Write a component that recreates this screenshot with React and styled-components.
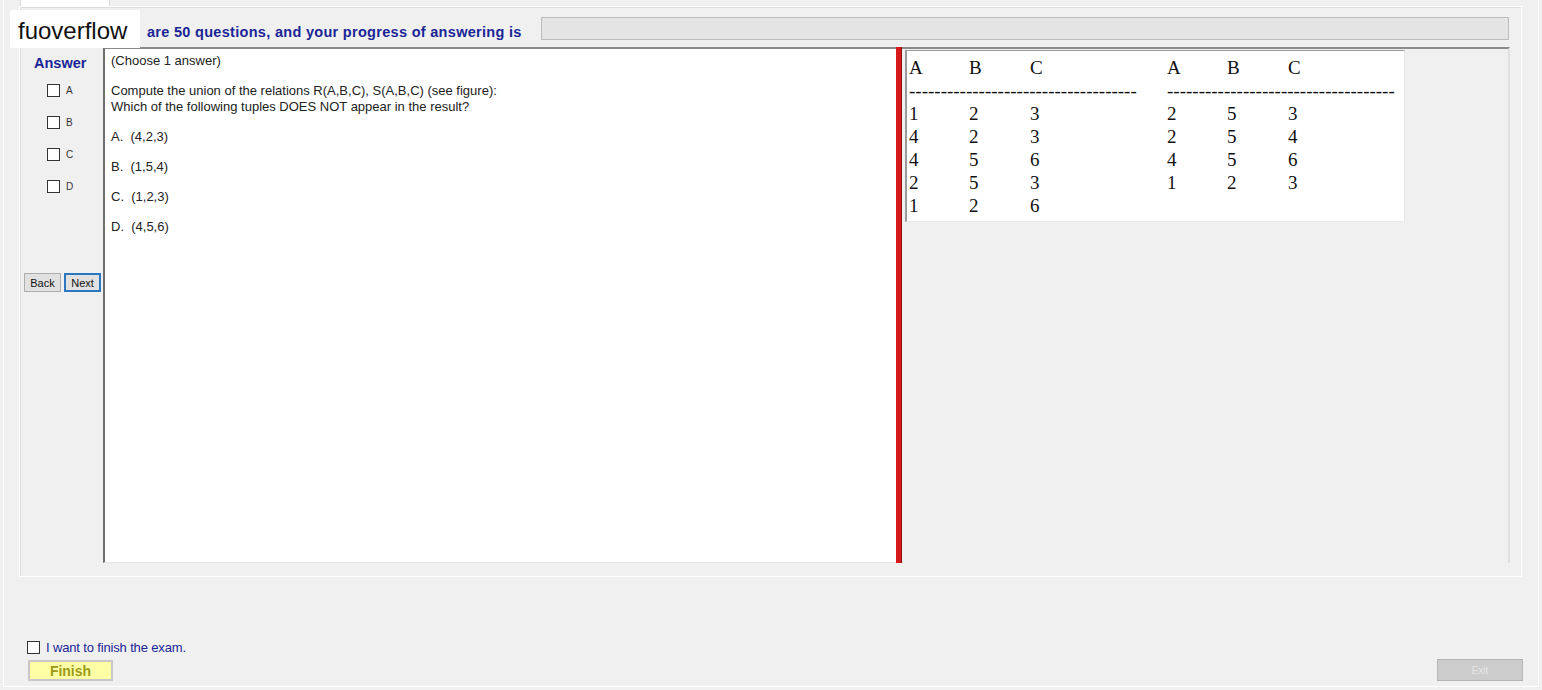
import React from 'react';
import styled, { createGlobalStyle } from 'styled-components';

const GlobalStyle = createGlobalStyle`
  *, *::before, *::after {
    box-sizing: border-box;
  }
  html, body {
    margin: 0;
    padding: 0;
    background: #f0f0f0;
  }
  body {
    font-family: 'Liberation Sans', Arial, sans-serif;
    color: #1a1a1a;
  }
`;

const Navy = '#1a2596';

const Screen = styled.div`
  position: relative;
  width: 1542px;
  height: 690px;
  background: #f0f0f0;
  overflow: hidden;
`;

const Frame = styled.div`
  margin-left: 3px;
  width: 1536px;
  height: 687px;
  border-left: 1px solid #fff;
  border-right: 1px solid #fff;
  border-bottom: 1px solid #fff;
  display: flex;
  flex-direction: column;
`;

const TabStrip = styled.div`
  height: 6px;
  padding-left: 16px;
  display: flex;
`;

const Tab = styled.div`
  width: 90px;
  height: 7px;
  background: #fff;
  border-left: 1px solid #dadada;
  border-right: 1px solid #dadada;
`;

const GroupBox = styled.div`
  margin-left: 15px;
  width: 1503px;
  height: 571px;
  border: 1px solid #fff;
  box-shadow: inset 1px 1px 0 #dcdcdc;
  display: flex;
  flex-direction: column;
  padding-left: 2px;
`;

const HeaderRow = styled.div`
  height: 40px;
  display: flex;
  align-items: flex-start;
`;

const Progress = styled.div`
  color: ${Navy};
  font-weight: bold;
  font-size: 14.5px;
  letter-spacing: 0.3px;
  line-height: 16px;
  margin: 17px 0 0 125px;
  white-space: nowrap;
`;

const ProgressBar = styled.div`
  margin: 10px 12px 0 auto;
  width: 968px;
  height: 23px;
  background: #e4e4e4;
  border: 1px solid #bcbcbc;
`;

const ContentRow = styled.div`
  height: 516px;
  display: flex;
`;

const AnswerCol = styled.div`
  width: 81px;
  display: flex;
  flex-direction: column;
  padding-top: 8px;
`;

const AnswerTitle = styled.div`
  color: ${Navy};
  font-weight: bold;
  font-size: 14.5px;
  line-height: 16px;
  padding-left: 12px;
`;

const Choices = styled.div`
  display: flex;
  flex-direction: column;
  gap: 16px;
  margin-top: 11px;
  padding-left: 25px;
`;

const Choice = styled.label`
  display: flex;
  align-items: center;
  gap: 6px;
  height: 16px;
  font-size: 10px;
  color: #333;
`;

const Box = styled.span`
  width: 13px;
  height: 13px;
  border: 1px solid #333;
  background: #fff;
  flex-shrink: 0;
`;

const NavButtons = styled.div`
  display: flex;
  gap: 3px;
  margin-top: 79px;
  padding-left: 2px;
`;

const NavButton = styled.button`
  width: 37px;
  height: 19px;
  padding: 0;
  font-family: 'Liberation Sans', Arial, sans-serif;
  font-size: 11px;
  color: #111;
  background: #e1e1e1;
  border: 1px solid ${(p) => (p.focused ? '#2b78c0' : '#adadad')};
  box-shadow: ${(p) => (p.focused ? 'inset 0 0 0 1px #2b78c0' : 'none')};
`;

const QuestionPanel = styled.div`
  width: 793px;
  background: #fff;
  border-top: 2px solid #8a8a8a;
  border-left: 2px solid #6e6e6e;
  border-bottom: 1px solid #e6e6e6;
  padding: 4px 0 0 6px;
  font-size: 13px;
  line-height: 16px;
  color: #222;
`;

const Para = styled.div`
  margin-top: ${(p) => p.gap || 0}px;
`;

const Splitter = styled.div`
  width: 6px;
  background: #d81818;
  border-right: 1px solid #8a1010;
`;

const FigurePanel = styled.div`
  flex: 1;
  border-top: 2px solid #8a8a8a;
  border-right: 2px solid #e0e0e0;
  padding: 1px 0 0 3px;
  margin-right: 11px;
`;

const Figure = styled.div`
  width: 500px;
  height: 172px;
  background: #fff;
  border-left: 2px solid #9a9a9a;
  border-top: 1px solid #9a9a9a;
  border-right: 1px solid #e8e8e8;
  border-bottom: 1px solid #e8e8e8;
  padding: 5px 0 0 2px;
  display: flex;
  align-items: flex-start;
  gap: 29px;
  font-family: 'Liberation Serif', 'Times New Roman', serif;
  font-size: 19px;
  line-height: 23px;
  color: #111;
`;

const Relation = styled.div`
  display: grid;
  grid-template-columns: 60px 61px 108px;
  align-content: start;
  width: 229px;
`;

const Dashes = styled.div`
  grid-column: 1 / 4;
  white-space: nowrap;
  overflow: hidden;
`;

const Footer = styled.div`
  flex: 1;
  display: flex;
  flex-direction: column;
  justify-content: flex-end;
  padding: 0 15px 5px 24px;
`;

const FinishCheck = styled.label`
  display: flex;
  align-items: center;
  gap: 6px;
  height: 16px;
  margin-left: -1px;
  margin-bottom: 4px;
  font-size: 13px;
  letter-spacing: -0.15px;
  color: ${Navy};
`;

const ButtonRow = styled.div`
  display: flex;
  justify-content: space-between;
  align-items: flex-end;
`;

const FinishButton = styled.button`
  width: 85px;
  height: 21px;
  padding: 0;
  background: #ffffa6;
  border: 2px solid #c8c8c8;
  font-family: 'Liberation Sans', Arial, sans-serif;
  font-weight: bold;
  font-size: 14px;
  color: #9a9a18;
`;

const ExitButton = styled.button`
  width: 86px;
  height: 22px;
  padding: 0;
  background: #cccccc;
  border: 1px solid #b4b4b4;
  font-family: 'Liberation Sans', Arial, sans-serif;
  font-size: 10px;
  color: #e6e6e6;
`;

const Watermark = styled.div`
  position: absolute;
  left: 10px;
  top: 10px;
  width: 130px;
  height: 38px;
  background: #fff;
  padding-left: 8px;
  font-family: 'Liberation Sans', Arial, sans-serif;
  font-size: 24px;
  line-height: 42px;
  color: #111;
`;

const R = [
  [1, 2, 3],
  [4, 2, 3],
  [4, 5, 6],
  [2, 5, 3],
  [1, 2, 6],
];

const S = [
  [2, 5, 3],
  [2, 5, 4],
  [4, 5, 6],
  [1, 2, 3],
];

const RelationTable = ({ rows }) => (
  <Relation>
    <span>A</span>
    <span>B</span>
    <span>C</span>
    <Dashes>{'-'.repeat(36)}</Dashes>
    {rows.map((row, i) => row.map((v, j) => <span key={`${i}-${j}`}>{v}</span>))}
  </Relation>
);

function App() {
  return (
    <Screen>
      <GlobalStyle />
      <Frame>
        <TabStrip>
          <Tab />
        </TabStrip>
        <GroupBox>
          <HeaderRow>
            <Progress>are 50 questions, and your progress of answering is</Progress>
            <ProgressBar />
          </HeaderRow>
          <ContentRow>
            <AnswerCol>
              <AnswerTitle>Answer</AnswerTitle>
              <Choices>
                {['A', 'B', 'C', 'D'].map((c) => (
                  <Choice key={c}>
                    <Box />
                    {c}
                  </Choice>
                ))}
              </Choices>
              <NavButtons>
                <NavButton>Back</NavButton>
                <NavButton focused>Next</NavButton>
              </NavButtons>
            </AnswerCol>
            <QuestionPanel>
              <Para>(Choose 1 answer)</Para>
              <Para gap={14}>
                Compute the union of the relations R(A,B,C), S(A,B,C) (see figure):
                <br />
                Which of the following tuples DOES NOT appear in the result?
              </Para>
              <Para gap={14}>A.&nbsp; (4,2,3)</Para>
              <Para gap={14}>B.&nbsp; (1,5,4)</Para>
              <Para gap={14}>C.&nbsp; (1,2,3)</Para>
              <Para gap={14}>D.&nbsp; (4,5,6)</Para>
            </QuestionPanel>
            <Splitter />
            <FigurePanel>
              <Figure>
                <RelationTable rows={R} />
                <RelationTable rows={S} />
              </Figure>
            </FigurePanel>
          </ContentRow>
        </GroupBox>
        <Footer>
          <FinishCheck>
            <Box />
            I want to finish the exam.
          </FinishCheck>
          <ButtonRow>
            <FinishButton>Finish</FinishButton>
            <ExitButton>Exit</ExitButton>
          </ButtonRow>
        </Footer>
      </Frame>
      <Watermark>fuoverflow</Watermark>
    </Screen>
  );
}

export default App;
